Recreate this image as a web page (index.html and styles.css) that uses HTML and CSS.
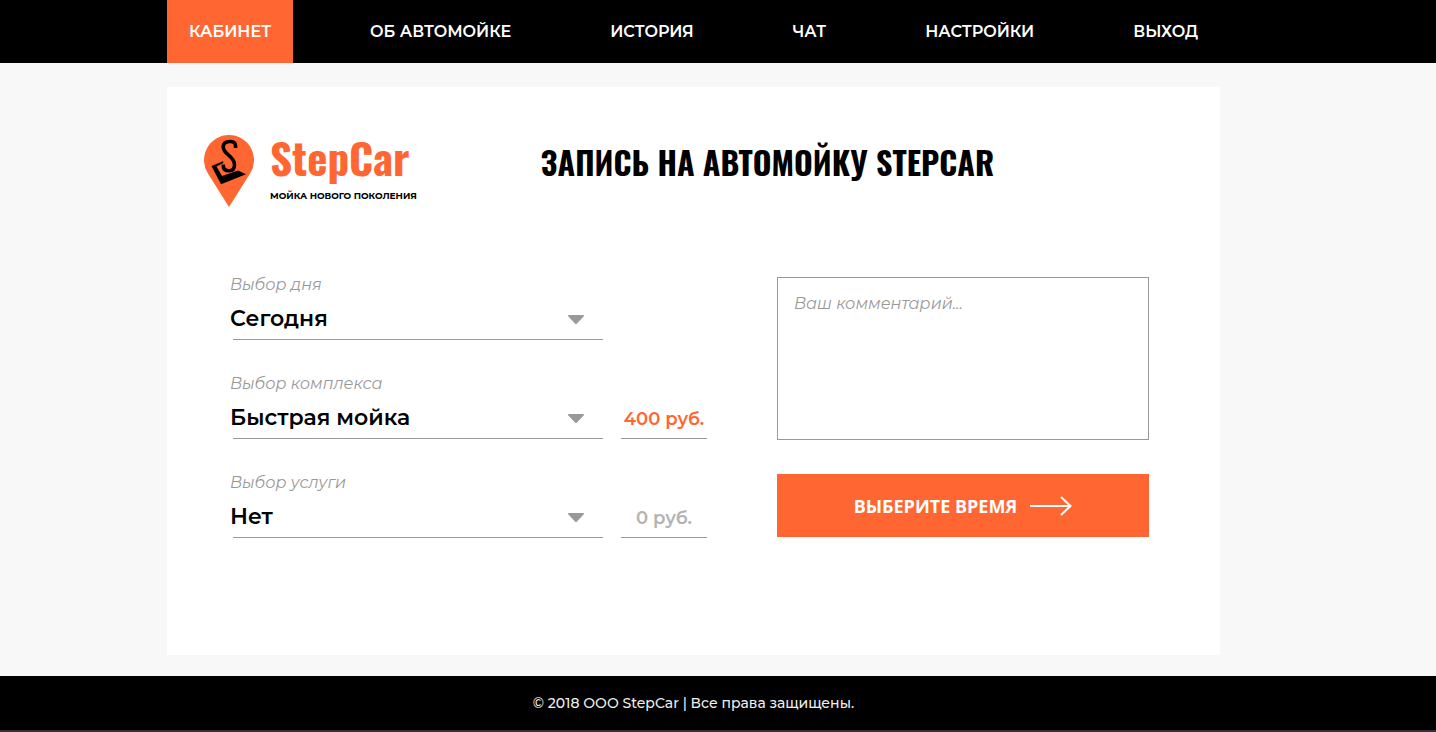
FILE: index.html
```html
<!DOCTYPE html>
<html lang="ru">
<head>
<meta charset="utf-8">
<meta name="viewport" content="width=device-width, initial-scale=1">
<title>StepCar — запись на автомойку</title>
<link rel="stylesheet" href="styles.css">
</head>
<body>
<header class="topbar">
  <nav class="wrap nav">
    <a class="nav-link active" href="#" aria-current="page">КАБИНЕТ</a>
    <a class="nav-link" href="#">ОБ АВТОМОЙКЕ</a>
    <a class="nav-link" href="#">ИСТОРИЯ</a>
    <a class="nav-link" href="#">ЧАТ</a>
    <a class="nav-link" href="#">НАСТРОЙКИ</a>
    <a class="nav-link" href="#">ВЫХОД</a>
  </nav>
</header>

<main class="wrap card">
  <div class="card-head">
    <a class="logo" href="#">
      <svg class="logo-pin" viewBox="0 0 50 72" aria-hidden="true">
        <path fill="#ff6632" d="M25 0A25 25 0 0 1 46.2 38.3L25 72 3.800 38.300A25 25 0 0 1 25 0Z"/>
        <path d="M7.500 31 19 26.300 19.500 27.800 12.500 31.500 18 41 34 35.500 42 39.300 17 49.200Z"/>
        <path fill="none" stroke="#000" stroke-width="3.600" d="M31.500 13V10.500C31.500 8 29.500 6.500 26 6.500 21.500 6.500 19.200 8.500 19.200 12 19.200 19.500 30.500 21 30.500 29.500 30.500 33.500 28.500 35.800 25 35.800 21.500 35.800 19.300 34 19.300 31V29.500"/>
      </svg>
      <span class="logo-text">
        <span class="logo-name">StepCar</span>
        <span class="logo-tag">МОЙКА НОВОГО ПОКОЛЕНИЯ</span>
      </span>
    </a>
    <h1 class="title">ЗАПИСЬ НА АВТОМОЙКУ STEPCAR</h1>
  </div>

  <form class="booking">
    <div class="choices">
      <div class="choice">
        <label class="choice-label" for="day">Выбор дня</label>
        <div class="picker">
          <select class="picker-select" id="day"><option>Сегодня</option><option>Завтра</option></select>
          <svg class="picker-arrow" viewBox="0 0 16 10" aria-hidden="true"><path d="M1 0h14q1.500 0 .6 1.400L9 8.500q-1 1-2 0L.4 1.400Q-.5 0 1 0Z"/></svg>
        </div>
      </div>
      <div class="choice">
        <label class="choice-label" for="package">Выбор комплекса</label>
        <div class="picker">
          <select class="picker-select" id="package"><option>Быстрая мойка</option></select>
          <svg class="picker-arrow" viewBox="0 0 16 10" aria-hidden="true"><path d="M1 0h14q1.500 0 .6 1.400L9 8.500q-1 1-2 0L.4 1.400Q-.5 0 1 0Z"/></svg>
        </div>
        <output class="price" for="package">400 руб.</output>
      </div>
      <div class="choice">
        <label class="choice-label" for="service">Выбор услуги</label>
        <div class="picker">
          <select class="picker-select" id="service"><option>Нет</option></select>
          <svg class="picker-arrow" viewBox="0 0 16 10" aria-hidden="true"><path d="M1 0h14q1.500 0 .6 1.400L9 8.500q-1 1-2 0L.4 1.400Q-.5 0 1 0Z"/></svg>
        </div>
        <output class="price price-empty" for="service">0 руб.</output>
      </div>
    </div>
    <div class="side">
      <textarea class="comment" aria-label="Комментарий" placeholder="Ваш комментарий..."></textarea>
      <button class="submit" type="button">
        ВЫБЕРИТЕ ВРЕМЯ
        <svg class="submit-arrow" viewBox="0 0 42 20" aria-hidden="true"><path d="M0 10H40M31 1l9.500 9-9.500 9"/></svg>
      </button>
    </div>
  </form>
</main>

<footer class="footer">
  <p class="wrap footer-text">© 2018 ООО StepCar | Все права защищены.</p>
</footer>
</body>
</html>
```

FILE: styles.css
```css
:root {
  --accent: #ff6632;
  --muted: #999;
  --sans: Montserrat, Inter, "Open Sans", sans-serif;
  --display: Oswald, "Roboto Condensed", "Liberation Sans Narrow", "Open Sans Condensed", sans-serif;
}

* { box-sizing: border-box; }

body {
  margin: 0;
  min-height: 100vh;
  display: flex;
  flex-direction: column;
  background: #f8f8f8;
  color: #000;
  font-family: var(--sans);
}

.wrap {
  margin-left: 167px;
  margin-right: 216px;
}

.topbar { background: #000; }

.nav {
  display: flex;
  justify-content: space-between;
}

.nav-link {
  padding: 0 22px;
  color: #fff;
  font-size: 16px;
  font-weight: 600;
  line-height: 63px;
  text-decoration: none;
  white-space: nowrap;
}

.nav-link.active { background: var(--accent); }

.card {
  flex: 1;
  margin-top: 24px;
  margin-bottom: 21px;
  padding: 48px 71px 0 63px;
  background: #fff;
}

.card-head {
  display: flex;
  gap: 124px;
  margin-left: -26px;
}

.logo {
  display: flex;
  gap: 16px;
  color: #000;
  text-decoration: none;
}

.logo-pin {
  width: 50px;
  height: 72px;
}

.logo-text {
  display: flex;
  flex-direction: column;
}

.logo-name {
  color: var(--accent);
  font-family: var(--display);
  font-size: 43px;
  font-weight: 700;
  line-height: 44px;
}

.logo-tag {
  margin-top: 10px;
  font-size: 9px;
  font-weight: 700;
  line-height: 14px;
  white-space: nowrap;
}

.title {
  margin: 0;
  font-family: var(--display);
  font-size: 32px;
  font-weight: 700;
  line-height: 54px;
  white-space: nowrap;
}

.booking {
  display: grid;
  grid-template-columns: minmax(0, 477fr) minmax(0, 372fr);
  gap: 70px;
  margin-top: 66px;
}

.choices {
  display: grid;
  gap: 32px;
  align-content: start;
}

.choice {
  display: grid;
  grid-template-columns: 1fr 86px;
  column-gap: 18px;
}

.choice-label {
  grid-column: 1 / -1;
  color: var(--muted);
  font-size: 16px;
  font-style: italic;
  font-weight: 400;
  line-height: 24px;
}

.picker {
  position: relative;
  background: linear-gradient(var(--muted), var(--muted)) 3px 100% / calc(100% - 3px) 1px no-repeat;
}

.picker-select {
  appearance: none;
  width: 100%;
  height: 43px;
  padding: 0 40px 0 0;
  border: 0;
  background: transparent;
  color: #000;
  font-family: var(--sans);
  font-size: 22px;
  font-weight: 600;
}

.picker-arrow {
  position: absolute;
  right: 19px;
  top: 18px;
  width: 16px;
  height: 10px;
  fill: var(--muted);
  pointer-events: none;
}

.price {
  border-bottom: 1px solid var(--muted);
  color: var(--accent);
  font-size: 18px;
  font-weight: 600;
  line-height: 46px;
  height: 43px;
  text-align: center;
  white-space: nowrap;
}

.price-empty { color: #b3b3b3; }

.side {
  display: flex;
  flex-direction: column;
  gap: 34px;
  padding-top: 4px;
}

.comment {
  display: block;
  width: 100%;
  height: 163px;
  padding: 14px 16px;
  border: 1px solid var(--muted);
  border-radius: 0;
  background: #fff;
  font-family: var(--sans);
  font-size: 16px;
  line-height: 24px;
  resize: none;
}

.comment::placeholder {
  color: var(--muted);
  font-style: italic;
  font-weight: 400;
}

.submit {
  display: flex;
  align-items: center;
  justify-content: center;
  gap: 13px;
  height: 63px;
  border: 0;
  background: var(--accent);
  color: #fff;
  font-family: "Open Sans", "Noto Sans", sans-serif;
  font-size: 18px;
  font-weight: 700;
}

.submit-arrow {
  width: 42px;
  height: 20px;
  fill: none;
  stroke: #fff;
  stroke-width: 2;
}

.footer {
  border-bottom: 2px solid #353038;
  background: #000;
  color: #eee;
}

.footer-text {
  margin-top: 0;
  margin-bottom: 0;
  font-size: 14px;
  font-weight: 500;
  line-height: 54px;
  text-align: center;
}
```
